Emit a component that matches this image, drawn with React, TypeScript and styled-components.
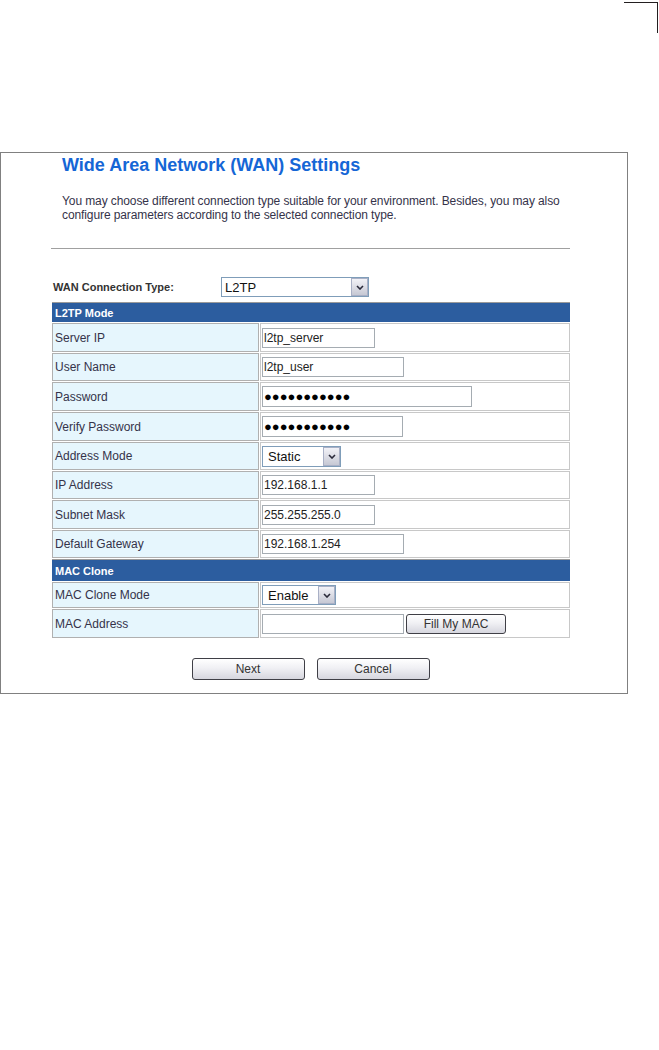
import styled, { createGlobalStyle } from "styled-components"

const GlobalStyle = createGlobalStyle`
  body {
    margin: 0;
    background: #ffffff;
    font-family: "Liberation Sans", Arial, sans-serif;
  }
`

const Page = styled.div`
  display: flex;
  flex-direction: column;
  width: 659px;
`

const CropMark = styled.div`
  align-self: flex-end;
  width: 33px;
  height: 30px;
  margin-top: 2px;
  margin-right: 1px;
  border-top: 1px solid #231f20;
  border-right: 1px solid #231f20;
`

const Frame = styled.div`
  width: 628px;
  margin-top: 119px;
  box-sizing: border-box;
  border: 1px solid #808080;
  padding: 0 0 13px 50px;
`

const Content = styled.div`
  width: 519px;
  display: flex;
  flex-direction: column;
`

const Title = styled.h1`
  margin: 2px 0 0 11px;
  font-size: 18px;
  line-height: 21px;
  font-weight: bold;
  color: #1566d6;
`

const Description = styled.p`
  margin: 18px 0 0 11px;
  width: 505px;
  font-size: 12px;
  line-height: 14px;
  letter-spacing: -0.1px;
  color: #35334a;
`

const Rule = styled.hr`
  margin: 26px 0 0 0;
  border: none;
  border-top: 1px solid #a0a0a0;
  height: 0;
`

const TypeRow = styled.div`
  display: flex;
  align-items: center;
  margin-top: 28px;
  padding-left: 2px;
`

const TypeLabel = styled.span`
  width: 168px;
  font-size: 11px;
  font-weight: bold;
  color: #333;
`

const FormTable = styled.div`
  display: flex;
  flex-direction: column;
  gap: 1px;
  margin-top: 5px;
  margin-left: 1px;
  width: 518px;
`

const SectionHeader = styled.div<{ $h: number }>`
  height: ${(p) => p.$h}px;
  box-sizing: border-box;
  border-top: 1px solid #9a9a9a;
  background: #2c5d9f;
  color: #ffffff;
  font-size: 11px;
  font-weight: bold;
  display: flex;
  align-items: center;
  padding-left: 3px;
`

const FormRow = styled.div<{ $h: number }>`
  display: grid;
  grid-template-columns: 207px 1fr;
  gap: 1px;
  height: ${(p) => p.$h}px;
`

const LabelCell = styled.div`
  box-sizing: border-box;
  border: 1px solid #b0b0b0;
  background: #e6f6fd;
  display: flex;
  align-items: center;
  padding-left: 2px;
  font-size: 12px;
  color: #35334a;
`

const ValueCell = styled.div`
  box-sizing: border-box;
  border: 1px solid #c8c8c8;
  background: #ffffff;
  display: flex;
  align-items: center;
  gap: 2px;
  padding-left: 1px;
`

const TextInput = styled.input<{ $w: number }>`
  width: ${(p) => p.$w}px;
  height: 20px;
  box-sizing: border-box;
  border: 1px solid #a5acb2;
  padding: 0 1px;
  margin: 0;
  font-family: "Liberation Sans", Arial, sans-serif;
  font-size: 12px;
  color: #222;
  background: #fff;
  outline: none;
`

const MaskedInput = styled(TextInput)`
  height: 21px;
  font-size: 13px;
  color: #000;
`

const Dropdown = styled.div<{ $w: number; $h: number; $pad: number }>`
  width: ${(p) => p.$w}px;
  height: ${(p) => p.$h}px;
  box-sizing: border-box;
  border: 1px solid #7f9db9;
  background: #ffffff;
  display: flex;
  align-items: stretch;
  font-size: 13px;
  color: #111;
  span:first-child {
    flex: 1;
    display: flex;
    align-items: center;
    padding-left: ${(p) => p.$pad}px;
  }
`

const DropArrow = styled.span`
  width: 17px;
  box-sizing: border-box;
  border: 1px solid #a9b0c6;
  background: linear-gradient(#f2f2f7, #c6c8d4);
  display: flex;
  align-items: center;
  justify-content: center;
`

const ButtonBar = styled.div`
  display: flex;
  justify-content: center;
  gap: 12px;
  margin-top: 20px;
`

const Button = styled.button<{ $w: number; $h: number }>`
  width: ${(p) => p.$w}px;
  height: ${(p) => p.$h}px;
  box-sizing: border-box;
  border: 1px solid #3f3f46;
  border-radius: 3px;
  background: linear-gradient(#ffffff, #f0f0f4 45%, #d6d6de);
  font-family: "Liberation Sans", Arial, sans-serif;
  font-size: 12px;
  color: #333;
  padding: 0;
`

function Select({ value, w, h = 20, pad = 5 }: { value: string; w: number; h?: number; pad?: number }) {
  return (
    <Dropdown $w={w} $h={h} $pad={pad}>
      <span>{value}</span>
      <DropArrow>
        <svg width="8" height="5" viewBox="0 0 8 5">
          <path d="M1 1 L4 4 L7 1" fill="none" stroke="#2a2a3a" strokeWidth="1.6" />
        </svg>
      </DropArrow>
    </Dropdown>
  )
}

const dots = "●●●●●●●●●●●"

export default function App() {
  return (
    <Page>
      <GlobalStyle />
      <CropMark />
      <Frame>
        <Content>
          <Title>Wide Area Network (WAN) Settings</Title>
          <Description>
            You may choose different connection type suitable for your environment. Besides, you may also
            configure parameters according to the selected connection type.
          </Description>
          <Rule />
          <TypeRow>
            <TypeLabel>WAN Connection Type:</TypeLabel>
            <Select value="L2TP" w={148} pad={3} />
          </TypeRow>

          <FormTable>
            <SectionHeader $h={20}>L2TP Mode</SectionHeader>
            <FormRow $h={29}>
              <LabelCell>Server IP</LabelCell>
              <ValueCell><TextInput $w={113} defaultValue="l2tp_server" /></ValueCell>
            </FormRow>
            <FormRow $h={28}>
              <LabelCell>User Name</LabelCell>
              <ValueCell><TextInput $w={142} defaultValue="l2tp_user" /></ValueCell>
            </FormRow>
            <FormRow $h={29}>
              <LabelCell>Password</LabelCell>
              <ValueCell><MaskedInput $w={210} defaultValue={dots} /></ValueCell>
            </FormRow>
            <FormRow $h={29}>
              <LabelCell>Verify Password</LabelCell>
              <ValueCell><MaskedInput $w={141} defaultValue={dots} /></ValueCell>
            </FormRow>
            <FormRow $h={28}>
              <LabelCell>Address Mode</LabelCell>
              <ValueCell><Select value="Static" w={79} h={21} /></ValueCell>
            </FormRow>
            <FormRow $h={28}>
              <LabelCell>IP Address</LabelCell>
              <ValueCell><TextInput $w={113} defaultValue="192.168.1.1" /></ValueCell>
            </FormRow>
            <FormRow $h={29}>
              <LabelCell>Subnet Mask</LabelCell>
              <ValueCell><TextInput $w={113} defaultValue="255.255.255.0" /></ValueCell>
            </FormRow>
            <FormRow $h={28}>
              <LabelCell>Default Gateway</LabelCell>
              <ValueCell><TextInput $w={142} defaultValue="192.168.1.254" /></ValueCell>
            </FormRow>
            <SectionHeader $h={22}>MAC Clone</SectionHeader>
            <FormRow $h={26}>
              <LabelCell>MAC Clone Mode</LabelCell>
              <ValueCell><Select value="Enable" w={74} /></ValueCell>
            </FormRow>
            <FormRow $h={29}>
              <LabelCell>MAC Address</LabelCell>
              <ValueCell>
                <TextInput $w={142} defaultValue="" />
                <Button $w={100} $h={20}>Fill My MAC</Button>
              </ValueCell>
            </FormRow>
          </FormTable>

          <ButtonBar>
            <Button $w={113} $h={22}>Next</Button>
            <Button $w={113} $h={22}>Cancel</Button>
          </ButtonBar>
        </Content>
      </Frame>
    </Page>
  )
}
